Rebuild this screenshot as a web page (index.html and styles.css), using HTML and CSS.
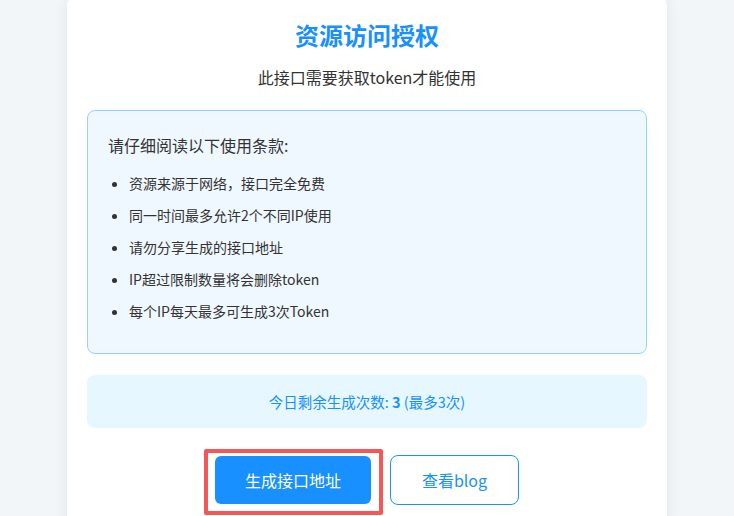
FILE: index.html
```html
<!DOCTYPE html>
<html lang="zh-CN">
<head>
  <meta charset="UTF-8" />
  <meta name="viewport" content="width=device-width, initial-scale=1.0"/>
  <title>资源访问授权</title>
  <link rel="stylesheet" href="styles.css">
</head>
<body>

<div class="card">
  <h1>资源访问授权</h1>
  <p class="subtitle">此接口需要获取token才能使用</p>

  <!-- 使用条款 -->
  <div class="terms">
    <h3>请仔细阅读以下使用条款:</h3>
    <ul>
      <li>资源来源于网络，接口完全免费</li>
      <li>同一时间最多允许2个不同IP使用</li>
      <li>请勿分享生成的接口地址</li>
      <li>IP超过限制数量将会删除token</li>
      <li>每个IP每天最多可生成3次Token</li>
    </ul>
  </div>

  <div class="quota">
    今日剩余生成次数: <strong>3</strong> (最多3次)
  </div>

  <div class="actions">
    <span class="highlight">
      <button class="btn btn-primary">生成接口地址</button>
    </span>
    <button class="btn btn-outline">查看blog</button>
  </div>
</div>

</body>
</html>
```

FILE: styles.css
```css
body {
  font-family: "Noto Sans CJK SC", "Noto Sans", sans-serif;
  margin: 0;
  background: #f3f6f9;
  color: #333;
}

.card {
  width: 600px;
  box-sizing: border-box;
  margin: -6px auto 0;
  padding: 24px 20px 30px;
  background: white;
  border-radius: 12px;
  box-shadow: 0 2px 16px rgba(0,0,0,0.07);
  text-align: center;
}

h1 {
  margin: 0;
  font-size: 24px;
  line-height: 34px;
  color: #1890ff;
  font-weight: bold;
}

.subtitle {
  margin: 13px 0 0;
  font-size: 16px;
  line-height: 24px;
}

.terms {
  margin-top: 21px;
  padding: 22px 20px 21px;
  background: #f0f8ff;
  border: 1px solid #91d5ff;
  border-radius: 8px;
  text-align: left;
}

.terms h3 {
  margin: 0;
  font-size: 16px;
  line-height: 24px;
  font-weight: normal;
}

.terms ul {
  margin: 15px 0 0;
  padding-left: 21px;
}

.terms li {
  font-size: 14px;
  line-height: 22px;
  margin-bottom: 10px;
}

.quota {
  margin-top: 21px;
  padding: 15px;
  background: #e6f7ff;
  border-radius: 8px;
  color: #1890ff;
  font-size: 14.5px;
  line-height: 23px;
}

.actions {
  display: flex;
  justify-content: center;
  align-items: center;
  gap: 19px;
  margin-top: 27px;
}

.highlight {
  position: relative;
  display: inline-flex;
}

.highlight::after {
  content: "";
  position: absolute;
  left: -11px;
  right: -12px;
  top: -7px;
  bottom: -11px;
  border: 4px solid #f55656;
  border-radius: 2px;
}

.btn {
  font-family: inherit;
  font-size: 16px;
  line-height: 24px;
  padding: 12px 30px;
  border-radius: 6px;
  cursor: pointer;
}

.btn-primary {
  background: #1890ff;
  color: white;
  border: none;
}

.btn-outline {
  padding: 12px 31px;
  background: white;
  color: #1890ff;
  border: 1px solid #1890ff;
  border-radius: 8px;
}
```
